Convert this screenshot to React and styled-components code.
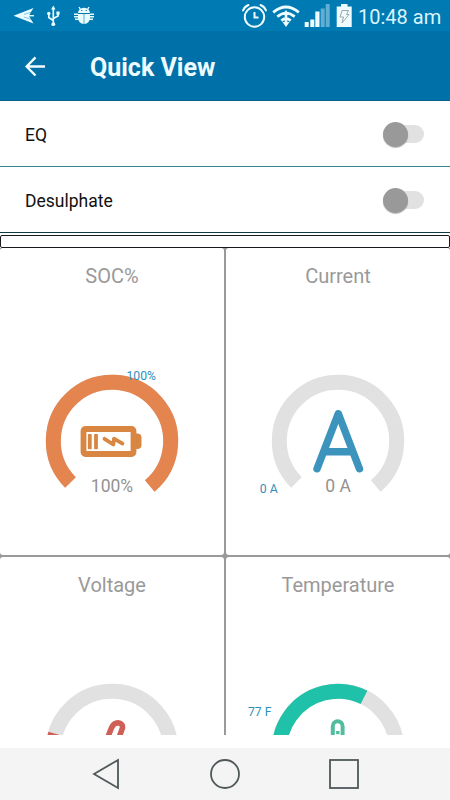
import styled, { createGlobalStyle } from "styled-components";

const START = 135;
const SWEEP = 275;
const RADIUS = 58.7;

function point(deg) {
  const rad = (deg * Math.PI) / 180;
  return `${RADIUS * Math.cos(rad)} ${RADIUS * Math.sin(rad)}`;
}

function arc(from, to) {
  const large = to - from > 180 ? 1 : 0;
  return `M${point(from)}A${RADIUS} ${RADIUS} 0 ${large} 1 ${point(to)}`;
}

function BatteryIcon() {
  return (
    <g fill="#d98643">
      <path d="M24 -7.5h2q3.5 0.5 3.5 4v7.500q0 3.500 -3.500 4h-2z" />
      <rect x="-28.500" y="-12" width="50" height="25" rx="2" fill="#fff" stroke="#d98643" strokeWidth="5.800" />
      <rect x="-24.100" y="-7" width="3.800" height="15.300" rx="0.800" />
      <rect x="-17.900" y="-7" width="3.800" height="15.300" rx="0.800" />
      <path
        d="M-7.500 -2.200L1.300 3.500L2 -2.300L10.500 2.600"
        fill="none"
        stroke="#d98643"
        strokeWidth="3.800"
        strokeLinecap="round"
        strokeLinejoin="round"
      />
    </g>
  );
}

function AmpereIcon() {
  return (
    <path
      d="M-21 27.800L0.300 -27.300L21.500 27.800M-13 10.700H13.500"
      fill="none"
      stroke="#3c94bd"
      strokeWidth="7.400"
      strokeLinecap="round"
      strokeLinejoin="round"
    />
  );
}

function VoltIcon() {
  return (
    <path
      d="M-5 -11L-0.300 -22.500Q2 -27.300 6 -27.300Q11.500 -26.500 10.300 -21.500L6.500 -11"
      fill="none"
      stroke="#cf6057"
      strokeWidth="5.600"
    />
  );
}

function ThermometerIcon() {
  return (
    <g fill="none" stroke="#52bd9d" strokeWidth="4">
      <path d="M-5.200 -8V-23.800a4.900 4.900 0 0 1 9.800 0V-8" />
      <rect x="-1.900" y="-19" width="3.400" height="3.200" fill="#52bd9d" stroke="none" />
    </g>
  );
}

const gauges = [
  { title: "SOC%", color: "#e4844f", end: 410, value: "100%", mark: "100%", x: 14.5, y: -61.2, Icon: BatteryIcon },
  { title: "Current", color: "#3c94bd", end: START, value: "0 A", mark: "0 A", x: -78.2, y: 51.5, Icon: AmpereIcon },
  { title: "Voltage", color: "#cf6057", end: 196, Icon: VoltIcon },
  { title: "Temperature", color: "#1fc1a9", end: 296.3, mark: "77 F", x: -90, y: -33.7, Icon: ThermometerIcon },
];

function Gauge({ title, color, end, value, mark, x, y, Icon }) {
  return (
    <Cell>
      <CellTitle>{title}</CellTitle>
      <Dial viewBox="-112 -80 224 160">
        <path d={arc(START, START + SWEEP)} fill="none" stroke="#e1e1e1" strokeWidth="15" />
        {end > START && <path d={arc(START, end)} fill="none" stroke={color} strokeWidth="15" />}
        <Icon />
        {value && (
          <Value x="0" y="50.500">
            {value}
          </Value>
        )}
        {mark && (
          <Mark x={x} y={y}>
            {mark}
          </Mark>
        )}
      </Dial>
    </Cell>
  );
}

function Setting({ label, line }) {
  return (
    <SettingRow $line={line}>
      <SettingLabel>{label}</SettingLabel>
      <Switch>
        <Thumb />
      </Switch>
    </SettingRow>
  );
}

function StatusBar() {
  return (
    <Status>
      <svg width="96" height="31" fill="#e8fbff">
        <path d="M13.500 15.700L33.500 8L28.800 15.700L33.500 23.500Z" />
        <path d="M24 14.300L33 11.600M24 17.100L33 19.800" stroke="#007ab3" strokeWidth="0.400" />
        <path d="M27 15.700H34" stroke="#e8fbff" strokeWidth="1.400" />
        <g fill="none" stroke="#e8fbff" strokeWidth="1.700">
          <path d="M53.300 9V24M53.300 20.500L48.800 17.500V13.500M53.300 18.500L58 16V12.500" />
        </g>
        <path d="M53.300 5.500L55.500 9.500H51.100Z" />
        <circle cx="53.300" cy="24.200" r="1.900" />
        <circle cx="48.800" cy="13.500" r="1.700" />
        <rect x="56.400" y="11.500" width="3.200" height="3.200" />
        <path d="M78 13a6 5.200 0 0 1 12 0zM78 14h5.700v10a6 6 0 0 1 -5.700 -6zM84.300 14H90v4a6 6 0 0 1 -5.700 6z" />
        <path
          d="M80.500 9.500L79 7M87.500 9.500L89 7M74 14.200h4M74 16.700h4M75 19.300h4M90 14.200h4M90 16.700h4M89 19.300h4"
          stroke="#e8fbff"
          strokeWidth="1.400"
        />
        <path d="M81.200 10.500h1.200M85.600 10.500h1.200" stroke="#007ab3" strokeWidth="1.200" />
      </svg>
      <StatusRight>
        <svg width="112" height="31" viewBox="240 0 112 31" fill="#effcff">
          <g fill="none" stroke="#effcff" strokeWidth="2" strokeLinecap="round">
            <circle cx="254.500" cy="17" r="9.700" />
            <path d="M254.500 12V17.500H258.500" strokeLinecap="butt" />
            <path d="M243 10.500Q244.500 6.500 248.500 5M266 10.500Q264.500 6.500 260.500 5" />
          </g>
          <g fill="none" stroke="#effcff" strokeWidth="2.800">
            <path d="M273.200 12.300Q286 1.800 298.800 12.300" />
            <path d="M277.300 16.600Q286 9.700 294.700 16.600" />
            <path d="M281.300 20.600Q286 17 290.700 20.600" />
          </g>
          <path d="M286 10l3.500 5h-2.200v7h2.200l-3.500 5l-3.500 -5h2.200v-7h-2.200z" />
          <rect x="304.700" y="22" width="4" height="5" />
          <rect x="310.300" y="19.500" width="4" height="7.500" />
          <rect x="315.300" y="11.500" width="4.200" height="15.500" />
          <rect x="320.700" y="8.500" width="4" height="18.500" opacity="0.400" />
          <rect x="325.700" y="4" width="4" height="23" opacity="0.400" />
          <path d="M341 4h6.500v2.500h4.200v20.500h-15v-20.500h4.300z" />
          <path d="M342 10.500h6.500l-2 4h2.500l-7 8.500l1.500 -6h-3.500z" fill="none" stroke="#a3a7a8" strokeWidth="1" />
        </svg>
        <Clock>10:48 am</Clock>
      </StatusRight>
    </Status>
  );
}

export default function App() {
  return (
    <Screen>
      <GlobalStyle />
      <StatusBar />

      <AppBar>
        <svg width="20" height="20" fill="none" stroke="#f0fcff" strokeWidth="2.400">
          <path d="M20 10.500H2M10.500 1.300L1.600 10.500L10.500 19.500" />
        </svg>
        <AppTitle>Quick View</AppTitle>
      </AppBar>

      <Setting label="EQ" line="#35858f" />
      <Setting label="Desulphate" line="#0d3a45" />
      <MessageBox />

      <Content>
        <Grid>
          {gauges.map((gauge) => (
            <Gauge key={gauge.title} {...gauge} />
          ))}
        </Grid>
      </Content>

      <NavBar>
        <svg width="28" height="32">
          <path d="M2 16L26 2V30Z" />
        </svg>
        <svg width="32" height="32">
          <circle cx="16" cy="16" r="14" />
        </svg>
        <svg width="32" height="32">
          <rect x="2" y="2" width="28" height="28" />
        </svg>
      </NavBar>
    </Screen>
  );
}

const GlobalStyle = createGlobalStyle`
  body {
    margin: 0;
    background: #fff;
    font-family: Roboto, sans-serif;
  }

  * {
    box-sizing: border-box;
  }

  svg {
    display: block;
    flex-shrink: 0;
  }
`;

const Screen = styled.main`
  display: flex;
  flex-direction: column;
  width: 450px;
  height: 800px;
  overflow: hidden;
  background: #fff;
`;

const Status = styled.header`
  display: flex;
  justify-content: space-between;
  flex: 0 0 31px;
  padding-right: 9px;
  background: #007ab3;
`;

const StatusRight = styled.div`
  display: flex;
  align-items: center;
`;

const Clock = styled.span`
  width: 83px;
  margin-left: 6px;
  padding-top: 3px;
  font-size: 20px;
  line-height: 24px;
  white-space: nowrap;
  color: #d8f5ff;
`;

const AppBar = styled.div`
  display: flex;
  align-items: center;
  flex: 0 0 70px;
  gap: 45px;
  padding: 1px 0 0 25px;
  border-bottom: 1px solid #075f8e;
  background: #0070a8;
`;

const AppTitle = styled.h1`
  margin: 0;
  padding-top: 3px;
  font-size: 25px;
  font-weight: 700;
  line-height: 30px;
  color: #effcff;
`;

const SettingRow = styled.div`
  display: flex;
  align-items: center;
  justify-content: space-between;
  flex: 0 0 66px;
  padding: 1px 26px 0 25px;
  border-bottom: 1px solid ${({ $line }) => $line};
`;

const SettingLabel = styled.span`
  padding-top: 2px;
  font-size: 17.5px;
  color: #111;
`;

const Switch = styled.div`
  display: flex;
  align-items: center;
  width: 36px;
  height: 18px;
  border-radius: 9px;
  background: #e1e1e1;
`;

const Thumb = styled.span`
  width: 25px;
  height: 25px;
  margin-left: -5px;
  border-radius: 50%;
  background: #999;
  box-shadow: 0 1px 1px rgba(0, 0, 0, 0.25);
`;

const MessageBox = styled.div`
  flex: 0 0 13px;
  margin-top: 2px;
  border: 1px solid #1c1820;
  border-radius: 2px;
`;

const Content = styled.section`
  flex: 0 0 487px;
  overflow: hidden;
`;

const Grid = styled.div`
  display: grid;
  grid-template-columns: 1fr 1fr;
  grid-auto-rows: 307px;
  gap: 2px;
  background: #999;
`;

const Cell = styled.article`
  display: flex;
  flex-direction: column;
  align-items: center;
  border-radius: 3px;
  background: #fff;
`;

const CellTitle = styled.h2`
  margin: 0;
  padding-top: 16px;
  font-size: 20px;
  font-weight: 400;
  line-height: 24px;
  color: #999;
`;

const Dial = styled.svg`
  width: 224px;
  height: 160px;
  margin-top: 73px;
`;

const Value = styled.text`
  font-size: 17.5px;
  text-anchor: middle;
  fill: #929292;
`;

const Mark = styled.text`
  font-size: 12.2px;
  fill: #2f91b8;
`;

const NavBar = styled.nav`
  display: flex;
  align-items: center;
  justify-content: space-between;
  flex: 0 0 52px;
  margin-top: auto;
  padding: 0 90px 0 92px;
  background: #f4f4f4;

  svg {
    fill: none;
    stroke: #50585a;
    stroke-width: 1.8;
  }

  svg:nth-child(2) {
    margin-left: 2px;
  }
`;
